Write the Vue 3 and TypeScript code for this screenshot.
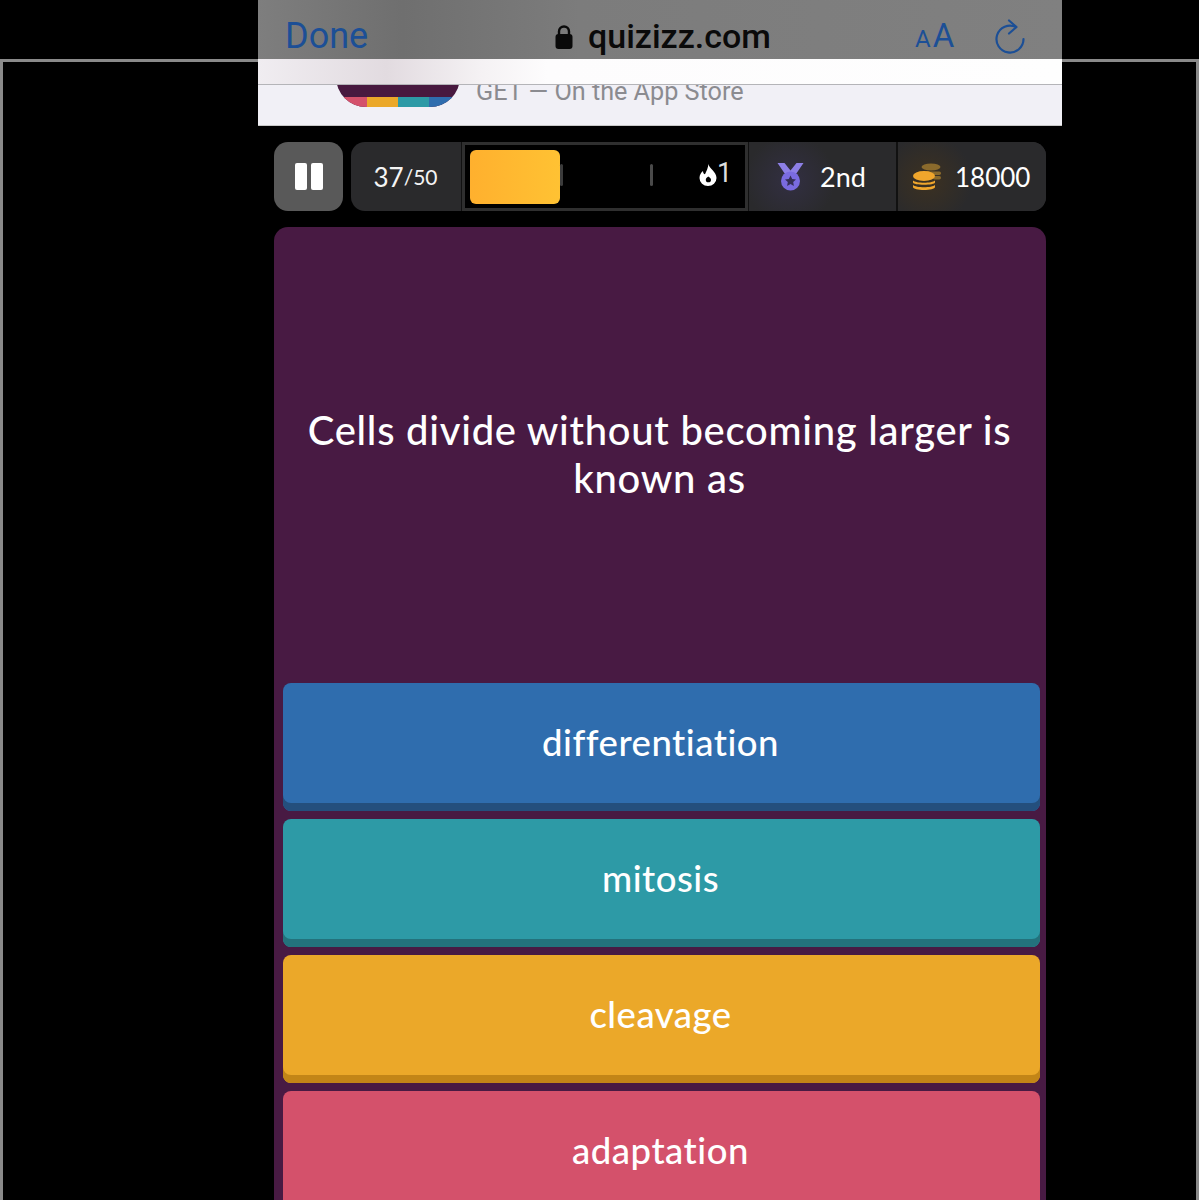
<script setup lang="ts">
const answers = [
  { text: 'differentiation', cls: 'blue' },
  { text: 'mitosis', cls: 'teal' },
  { text: 'cleavage', cls: 'amber' },
  { text: 'adaptation', cls: 'rose' },
]
</script>

<template>
  <div class="screen">
    <div class="frame-line"></div>
    <main class="phone">
      <header class="toolbar">
        <span class="done">Done</span>
        <span class="address">
          <svg class="lock" viewBox="0 0 18 26" width="18" height="26">
            <path d="M4 11V7.500a5 5 0 0 1 10 0V11" fill="none" stroke="#0a0a0a" stroke-width="2.400" />
            <rect x="0.500" y="10" width="17" height="15" rx="3" fill="#0a0a0a" />
          </svg>
          <span>quizizz.com</span>
        </span>
        <span class="reader"><small>A</small>A</span>
        <svg class="reload" viewBox="0 0 32 36" width="32" height="36">
          <path d="M22 8A13.500 13.500 0 1 0 29.500 20" fill="none" stroke="#1c4f96" stroke-width="2.200" stroke-linecap="round" />
          <path d="M15 1.500L22.500 8 15 14.500" fill="none" stroke="#1c4f96" stroke-width="2.200" stroke-linecap="round" stroke-linejoin="round" />
        </svg>
      </header>

      <section class="banner">
        <div class="banner-glow"></div>
        <div class="banner-body">
          <div class="app-icon">
            <div class="app-icon-stripes"><i class="s1"></i><i class="s2"></i><i class="s3"></i><i class="s4"></i></div>
          </div>
          <span class="banner-text">GET — On the App Store</span>
        </div>
      </section>

      <section class="game">
        <div class="stats">
          <button class="pause" aria-label="Pause"><i></i><i></i></button>
          <div class="bar">
            <div class="cell count">37<small>/50</small></div>
            <div class="cell streak">
              <div class="fill"></div>
              <span class="tick tick-a"></span>
              <span class="tick tick-b"></span>
              <span class="flame">
                <svg viewBox="0 0 18 22" width="18" height="22">
                  <path fill-rule="evenodd" fill="#fff" d="M9.500 0c.5 4.500 8 7.500 8 14a8.500 8 0 0 1-17 0c0-3 1.500-5.500 3.500-7 0 2 .8 3 2 3.300C7.500 7 9 4 9.500 0zM9.300 12.500c-1.500 1-2.500 2-2.500 3.200a2.600 2.600 0 0 0 5.200 0c0-1.200-1.200-2.200-2.700-3.200z" />
                </svg>
                <b>1</b>
              </span>
            </div>
            <div class="cell rank">
              <svg viewBox="0 0 27 30" width="27" height="30">
                <path d="M0.500 1h7l6 7.500 6-7.500h7l-7.500 11h-11z" fill="#8d7fe6" />
                <circle cx="13.500" cy="19" r="9.500" fill="#7a6be0" />
                <path d="M13.500 13.500l1.700 3.500 3.800.5-2.800 2.600.7 3.800-3.400-1.800-3.400 1.800.7-3.800-2.800-2.600 3.800-.5z" fill="#352f58" />
              </svg>
              <span>2nd</span>
            </div>
            <div class="cell coins">
              <svg viewBox="0 0 28 28" width="28" height="28">
                <g fill="#8a6a2c">
                  <ellipse cx="18" cy="4" rx="9.500" ry="3.500" />
                  <rect x="9" y="8.500" width="19" height="3.500" rx="1.700" />
                  <rect x="20" y="13" width="8" height="3.500" rx="1.700" />
                </g>
                <g fill="#f0a62c">
                  <ellipse cx="11" cy="13" rx="11" ry="5" />
                  <path d="M0 17.500c3 3 19 3 22 0v2c0 3-22 3-22 0z" />
                  <path d="M0 22c3 3 19 3 22 0v2c0 4-22 4-22 0z" />
                </g>
              </svg>
              <span>18000</span>
            </div>
          </div>
        </div>

        <div class="quiz">
          <div class="question">Cells divide without becoming larger is<br />known as</div>
          <div class="answers">
            <div v-for="a in answers" :key="a.text" class="answer" :class="a.cls">{{ a.text }}</div>
          </div>
        </div>
      </section>
    </main>
  </div>
</template>

<style>
html, body { margin: 0; background: #000; }
</style>

<style scoped>
.screen {
  position: relative;
  width: 1199px;
  height: 1200px;
  overflow: hidden;
  background: #000;
  display: flex;
  justify-content: flex-start;
  padding-left: 258px;
  box-sizing: border-box;
}
.frame-line {
  position: absolute;
  left: 0;
  right: 0;
  top: 59px;
  bottom: -4px;
  border: 3px solid #8a8a8a;
  border-width: 3px 3px 0 3px;
}
.phone {
  position: relative;
  width: 804px;
  display: flex;
  flex-direction: column;
}
.toolbar {
  height: 59px;
  background: linear-gradient(90deg, #7e7e7e 0%, #6f6f6f 18%, #7c7c7c 40%, #808080 100%);
  display: flex;
  align-items: center;
  padding: 13px 0 0 27px;
  box-sizing: border-box;
}
.done {
  font: 36px/1 Roboto, "Liberation Sans", sans-serif;
  color: #1c4f96;
  width: 270px;
}
.address {
  display: flex;
  align-items: center;
  gap: 15px;
  width: 360px;
  font: 500 34px/1 Roboto, "Liberation Sans", sans-serif;
  color: #0a0a0a;
}
.lock { flex: none; margin-top: 1px; }
.reader {
  font: 33px/1 Roboto, "Liberation Sans", sans-serif;
  color: #1c4f96;
  width: 79px;
  white-space: nowrap;
  margin-top: -2px;
}
.reader small { font-size: 24px; margin-right: 2px; }
.reload { flex: none; margin-top: 2px; }

.banner {
  position: relative;
  height: 67px;
  background: #f1f0f6;
  border-bottom: 1px solid #c8c8c8;
  box-sizing: border-box;
  overflow: hidden;
}
.banner-glow {
  position: absolute;
  z-index: 1;
  left: 0;
  right: 0;
  top: 0;
  height: 25px;
  background: linear-gradient(90deg, #f0edf1 0%, #e2dbe0 16%, #f5f2f4 28%, #fdfcfd 36%, #fefefe 100%);
  border-bottom: 1px solid #b4b4b8;
}
.banner-body {
  display: flex;
  align-items: flex-start;
  padding-left: 78px;
}
.app-icon {
  position: relative;
  width: 124px;
  height: 47px;
  margin-top: 1px;
  border-radius: 0 0 30px 30px;
  overflow: hidden;
  background: #48193f;
  flex: none;
}
.app-icon-stripes {
  position: absolute;
  left: 0;
  right: 0;
  bottom: 0;
  height: 10px;
  display: grid;
  grid-template-columns: 31px 31px 31px 31px;
}
.s1 { background: #d4516b; }
.s2 { background: #eba829; }
.s3 { background: #2d9aa6; }
.s4 { background: #2f6dae; }
.banner-text {
  margin: 18px 0 0 16px;
  font: 25.2px/1.2 Roboto, "Liberation Sans", sans-serif;
  color: #8b8b90;
}

.game {
  padding: 16px 16px 0;
  display: flex;
  flex-direction: column;
  gap: 16px;
}
.stats {
  display: flex;
  height: 69px;
  gap: 8px;
}
.pause {
  width: 69px;
  flex: none;
  border: 0;
  padding: 0;
  background: #595959;
  border-radius: 14px;
  display: flex;
  align-items: center;
  justify-content: center;
  gap: 4px;
}
.pause i {
  display: block;
  width: 12px;
  height: 27px;
  background: #fff;
  border-radius: 2px;
}
.bar {
  flex: 1;
  display: flex;
  background: #2a2a2c;
  border-radius: 14px;
  overflow: hidden;
  color: #fff;
  font: 26px/1 Lato, "Noto Sans", sans-serif;
}
.cell {
  display: flex;
  align-items: center;
  box-sizing: border-box;
  flex: none;
}
.count {
  width: 111px;
  justify-content: center;
  padding-right: 2px;
  color: #f4f4f4;
}
.count small { font-size: 21px; }
.streak {
  position: relative;
  width: 286px;
  background: #000;
  border: 3px solid #2f2f2f;
  box-shadow: -1px 0 0 #111, 1px 0 0 #111;
}
.fill {
  position: absolute;
  left: 5px;
  top: 5px;
  width: 90px;
  height: 54px;
  border-radius: 6px;
  background: linear-gradient(90deg, #ffb02e, #ffc233);
}
.tick {
  position: absolute;
  top: 19px;
  width: 3px;
  height: 22px;
  border-radius: 2px;
  background: #3b3b3b;
}
.tick-a { left: 95px; }
.tick-b { left: 185px; background: #4a4a4a; }
.flame {
  position: absolute;
  right: 17px;
  top: 18px;
  display: flex;
  align-items: center;
}
.flame b {
  width: 11px;
  text-align: right;
  font: 400 27px/1 Roboto, "Liberation Sans", sans-serif;
  color: #dedede;
  margin-top: -3px;
}
.rank {
  width: 149px;
  margin-left: 1px;
  border-right: 2px solid #111;
  gap: 16px;
  padding-left: 28px;
  font-size: 27px;
  background: radial-gradient(circle at 28% 55%, #322f42 0%, #2a2a2c 40%);
}
.coins {
  flex: 1;
  gap: 14px;
  padding-left: 15px;
  background: radial-gradient(circle at 20% 55%, #3c3121 0%, #2a2a2c 36%);
}
.quiz {
  background: #481a43;
  border-radius: 14px 14px 0 0;
  height: 973px;
  padding: 0 6px 0 9px;
  box-sizing: border-box;
}
.question {
  height: 456px;
  padding: 179px 4px 0 0;
  box-sizing: border-box;
  text-align: center;
  color: #fff;
  font: 500 40px/48px Lato, "Noto Sans", sans-serif;
  letter-spacing: 0.72px;
}
.answers {
  display: flex;
  flex-direction: column;
  gap: 8px;
}
.answer {
  height: 128px;
  box-sizing: border-box;
  padding: 0 2px 10px 0;
  border-radius: 8px;
  display: flex;
  align-items: center;
  justify-content: center;
  color: #fff;
  font: 500 36.5px/1 Lato, "Noto Sans", sans-serif;
  letter-spacing: 0.5px;
}
.blue { background: #2f6dae; box-shadow: inset 0 -8px 0 #244f7d; }
.teal { background: #2d9aa6; box-shadow: inset 0 -8px 0 #23727c; }
.amber { background: #eba829; box-shadow: inset 0 -8px 0 #c28517; }
.rose { background: #d4516b; box-shadow: inset 0 -8px 0 #a63e54; }
</style>
